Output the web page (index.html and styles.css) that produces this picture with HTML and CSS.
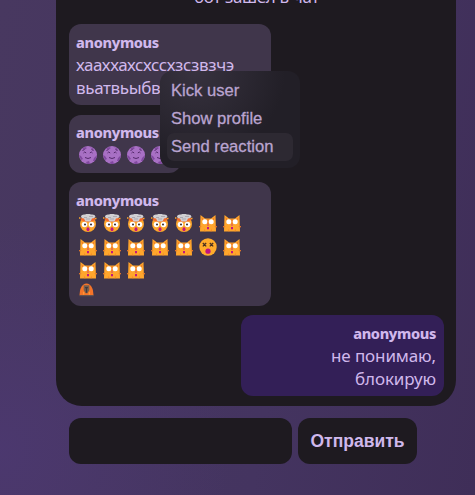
FILE: index.html
```html
<!DOCTYPE html>
<html lang="ru">
<head>
<meta charset="utf-8">
<title>Чат</title>
<link rel="stylesheet" href="styles.css">
</head>
<body>
<svg class="defs" aria-hidden="true">
  <symbol id="moon" viewBox="0 0 18 18">
    <circle cx="9" cy="9" r="9" fill="#a870c4"/>
    <path d="M3 3l3-2 2 1-2 1.500zM11 1l4 2-1 1zM0 9l2 1 2 3-2 1zM15 12l3-3-2 6-2 0zM7 16l3-1 1 3-3 0z" fill="#80489f"/>
    <path d="M4.500 7l1.200-1L7.200 7M10.800 7l1.500-1 1.200 1M6 11.500q3 2 6 0M3.500 4.500l2-1M12.500 3.500l2 1" fill="none" stroke="#54296b" stroke-width="1"/>
  </symbol>
  <symbol id="boom" viewBox="0 0 18 18">
    <circle cx="9" cy="10" r="8" fill="#fca62c"/>
    <path d="M1.500 6q7 4 15 0l-1 -2h-13z" fill="#f4692c"/>
    <path d="M2 2q1-2 4-1.500 3-1.500 6 0 4-.5 4.500 2-.5 2-3.500 2L11.500 7.500h-5L5 4.500Q2 4.500 2 2z" fill="#d0cfd2"/>
    <path d="M5 3.500h3M10 2.500h4M7 5h4" stroke="#a2a0a8" stroke-width=".8"/>
    <path d="M0 4h1.500M16 4.500h1.500" stroke="#fca62c" stroke-width="1.500"/>
    <circle cx="5.500" cy="10.500" r="2.800" fill="#fff"/><circle cx="12.500" cy="10.500" r="2.800" fill="#fff"/>
    <circle cx="6" cy="10.500" r="1" fill="#30262b"/><circle cx="12" cy="10.500" r="1" fill="#30262b"/>
    <ellipse cx="9" cy="15.200" rx="1.500" ry="2" fill="#c3167f"/>
  </symbol>
  <symbol id="cat" viewBox="0 0 18 18">
    <path d="M1.500 1L6 4.500h6L16.500 1 17 17.500H1z" fill="#ffa62c"/>
    <path d="M2.500 3l2 2.200-1.500 1zM15.500 3l-2 2.200 1.500 1zM8.300 5h1.400v5H8.300zM0 12l3 .5-3 1zM18 12l-3 .5 3 1zM5.500 17.500v-3l1 3zM12.500 17.500v-3l-1 3z" fill="#ef7b27"/>
    <circle cx="5.800" cy="7.800" r="2.500" fill="#fff"/><circle cx="12.200" cy="7.800" r="2.500" fill="#fff"/>
    <path d="M8.300 10.500h1.400v1H8.300zM8 13h2v2.300H8z" fill="#c3167f"/>
  </symbol>
  <symbol id="dizzy" viewBox="0 0 18 18">
    <circle cx="9" cy="9" r="8.700" fill="#ffac2c"/>
    <path d="M3.800 5l3.400 3.400m0-3.400l-3.400 3.400M10.800 5l3.400 3.400m0-3.400l-3.400 3.400" stroke="#49301f" stroke-width="1.300"/>
    <circle cx="9" cy="13.200" r="2.600" fill="#bd1481"/>
  </symbol>
  <symbol id="ape" viewBox="0 0 16 14">
    <path d="M.5 12.500Q1 4 4.500 1.500q3.500-3 7 0Q15 4 15.500 12.500z" fill="#f47429"/>
    <path d="M5 2h6v5L9 10.500H7L5 7z" fill="#75604f"/>
    <path d="M6.500 4.500h3M8 5v5" stroke="#3f3940" stroke-width="1.300"/>
    <path d="M5 12V9M11 12V9" stroke="#ffa33c" stroke-width="1"/>
    <path d="M.5 13h15" stroke="#66534d" stroke-width="1.300"/>
  </symbol>
</svg>
<main class="page">
  <section class="chat">
    <p class="notice">бот зашел в чат</p>
    <article class="message first">
      <strong class="author">anonymous</strong>
      <p class="text">хааххахсхссхзсзвзчэ</p>
      <p class="text">вьатвьыбв</p>
      <nav class="menu">
        <button class="menu-item">Kick user</button>
        <button class="menu-item">Show profile</button>
        <button class="menu-item active">Send reaction</button>
      </nav>
    </article>
    <article class="message short">
      <strong class="author">anonymous</strong>
      <div class="emojis"><svg><use href="#moon"/></svg><svg><use href="#moon"/></svg><svg><use href="#moon"/></svg><svg><use href="#moon"/></svg></div>
    </article>
    <article class="message reactions">
      <strong class="author">anonymous</strong>
      <div class="emojis"><svg><use href="#boom"/></svg><svg><use href="#boom"/></svg><svg><use href="#boom"/></svg><svg><use href="#boom"/></svg><svg><use href="#boom"/></svg><svg><use href="#cat"/></svg><svg><use href="#cat"/></svg></div>
      <div class="emojis"><svg><use href="#cat"/></svg><svg><use href="#cat"/></svg><svg><use href="#cat"/></svg><svg><use href="#cat"/></svg><svg><use href="#cat"/></svg><svg><use href="#dizzy"/></svg><svg><use href="#cat"/></svg></div>
      <div class="emojis"><svg><use href="#cat"/></svg><svg><use href="#cat"/></svg><svg><use href="#cat"/></svg></div>
      <div class="emojis small"><svg><use href="#ape"/></svg></div>
    </article>
    <article class="message own">
      <strong class="author">anonymous</strong>
      <p class="text">не понимаю,</p>
      <p class="text">блокирую</p>
    </article>
  </section>
  <form class="composer">
    <input class="field" type="text" aria-label="Сообщение">
    <button class="send" type="button">Отправить</button>
  </form>
</main>
</body>
</html>
```
FILE: styles.css
```css
* { box-sizing: border-box; }
body {
  margin: 0;
  height: 495px;
  overflow: hidden;
  color: #d0b8ec;
  font-family: "Noto Sans", sans-serif;
  background:
    radial-gradient(circle at 0 450px, rgba(76, 56, 112, .9), rgba(73, 55, 104, 0) 230px),
    linear-gradient(100deg, #483860, #443460 60%, #3f2e58);
}
p { margin: 0; }
button, input { font: inherit; color: inherit; border: 0; }
.defs { display: none; }
.page { width: 400px; margin-left: 56px; }
.chat {
  height: 406px;
  display: flex;
  flex-direction: column;
  align-items: flex-start;
  padding: 0 12px 0 13px;
  border-radius: 0 0 26px 26px;
  background: #1e1a20;
}
.notice {
  height: 24px;
  width: 100%;
  flex: none;
  text-align: center;
  font-size: 17px;
  line-height: 24px;
  letter-spacing: -.35px;
  margin-top: -15px;
  margin-bottom: 15px;
}
.message {
  position: relative;
  width: 202px;
  flex: none;
  padding: 7px 7px 0;
  border-radius: 12px;
  background: #40364b;
}
.first { height: 81px; }
.short { width: 112px; height: 58px; margin-top: 10px; padding-top: 6px; }
.reactions { height: 124px; margin-top: 9px; }
.own {
  width: 203px;
  height: 81px;
  margin-top: 9px;
  padding-right: 8px;
  align-self: flex-end;
  background: #331f57;
  text-align: right;
}
.author { display: block; height: 22px; font-size: 14.500px; font-weight: 800; line-height: 22px; letter-spacing: -.35px; }
.text { font-size: 17px; line-height: 23px; letter-spacing: -.36px; white-space: nowrap; }
.own .text { letter-spacing: -.12px; }
.emojis { display: flex; height: 25px; gap: 6px; padding: 3px 3px 0; }
.emojis svg { width: 18px; height: 18px; flex: none; }
.emojis + .emojis { height: 23px; padding-top: 2px; }
.emojis + .emojis.small { padding-top: 1px; }
.emojis.small svg { width: 15px; height: 14px; }
.menu {
  position: absolute;
  z-index: 2;
  left: 91px;
  top: 47px;
  width: 140px;
  height: 97px;
  display: flex;
  flex-direction: column;
  padding: 6px 7px;
  border-radius: 12px;
  background: radial-gradient(circle at 35px 0, #37323f, rgba(35, 31, 40, 0) 90px), #221f27;
}
.menu-item {
  height: 28px;
  padding: 0 4px;
  border-radius: 7px;
  background: none;
  color: #baa4d0;
  font: 16.600px/28px "Liberation Sans", sans-serif;
  -webkit-text-stroke: .3px #baa4d0;
  text-align: left;
  white-space: nowrap;
}
.menu-item:first-child { padding-bottom: 2px; }
.menu-item.active { padding-bottom: 2px; background: #2d2932; }
.composer { display: flex; gap: 6px; margin: 12px 0 0 13px; }
.field { width: 223px; height: 46px; padding: 10px; border-radius: 12px; background: #1e1a20; }
.send {
  width: 119px;
  height: 46px;
  padding: 0;
  border-radius: 12px;
  background: #1e1a20;
  font: bold 17.500px "Liberation Sans", sans-serif;
}
```
